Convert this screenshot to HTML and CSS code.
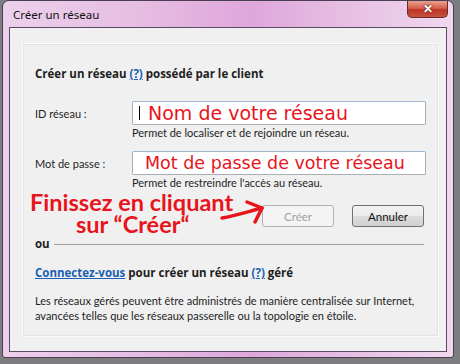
FILE: index.html
```html
<!DOCTYPE html>
<html lang="fr">
<head>
  <meta charset="UTF-8" />
  <title>Créer un réseau</title>
  <link rel="stylesheet" href="styles.css">
</head>
<body>
  <div class="window">
    <div class="titlebar">
      <span class="title">Créer un réseau</span>
      <div class="close">&#x2715;</div>
    </div>
    <div class="client">
      <div class="panel">
        <div class="heading">Créer un réseau <a href="#">(?)</a> possédé par le client</div>

        <div class="field">
          <label>ID réseau :</label>
          <div class="input"><span class="caret"></span><span class="note note-name">Nom de votre réseau</span></div>
        </div>
        <div class="hint">Permet de localiser et de rejoindre un réseau.</div>

        <div class="field field-pass">
          <label>Mot de passe :</label>
          <div class="input"><span class="note note-pass">Mot de passe de votre réseau</span></div>
        </div>
        <div class="hint">Permet de restreindre l'accès au réseau.</div>

        <div class="buttons">
          <button class="btn" disabled>Créer</button>
          <button class="btn">Annuler</button>
        </div>

        <div class="or"><span>ou</span><div class="line"></div></div>

        <div class="connect"><a href="#">Connectez-vous</a> pour créer un réseau <a href="#">(?)</a> géré</div>
        <p class="desc">Les réseaux gérés peuvent être administrés de manière centralisée sur Internet,<br>avancées telles que les réseaux passerelle ou la topologie en étoile.</p>

        <div class="callout">
          <div>Finissez en cliquant</div>
          <div class="callout-2">sur “Créer“</div>
        </div>
        <svg class="arrow" width="60" height="30" viewBox="0 0 60 30">
          <path d="M7 20 C20 18 35 13 47 10" stroke="#e8141c" stroke-width="3.5" fill="none" stroke-linecap="round"/>
          <path d="M32 4 L47 10 L40 24" stroke="#e8141c" stroke-width="3.5" fill="none" stroke-linecap="round" stroke-linejoin="round"/>
        </svg>
      </div>
    </div>
  </div>
</body>
</html>
```

FILE: styles.css
```css
body {
  margin: 0;
  background-color: #7d7d80;
  font-family: "Lato", "Noto Sans", sans-serif;
  font-size: 11px;
  color: #1e1e1e;
  height: 364px;
  overflow: hidden;
}

.window {
  margin-left: 2px;
  width: 452px;
  height: 358px;
  border: 1px solid #4a3e52;
  border-radius: 7px 7px 3px 3px;
  background: linear-gradient(90deg, #ecd0ec 0%, #e6bde3 30%, #dea7db 55%, #e6bde3 75%, #f0d8ef 100%);
  box-sizing: border-box;
  display: flex;
  flex-direction: column;
  padding: 0 6px 5px 6px;
}

.titlebar {
  height: 26px;
  display: flex;
  justify-content: space-between;
  align-items: flex-start;
}

.title {
  font-family: "Noto Sans", sans-serif;
  font-size: 11.5px;
  color: #111;
  margin-top: 6px;
  margin-left: 4px;
}

.close {
  width: 41px;
  height: 17px;
  margin-right: -1px;
  border: 1px solid #6b2a2a;
  border-top: none;
  border-radius: 0 0 5px 5px;
  background: linear-gradient(#e8a090 0%, #d8604c 45%, #bc3426 55%, #c8523f 100%);
  color: #fff;
  font-size: 12px;
  font-weight: bold;
  text-align: center;
  line-height: 16px;
  text-shadow: 0 0 2px #5a1a1a, 0 0 1px #5a1a1a;
  box-sizing: border-box;
}

.client {
  flex: 1;
  min-height: 0;
  background-color: #f0f0f0;
  border: 1px solid #5b4a62;
  padding: 15px 9px 14px 12px;
  display: flex;
}

.panel {
  flex: 1;
  position: relative;
  border: 1px solid #fbfbfb;
  box-shadow: inset 0 0 0 1px #e4e4e4;
  padding: 22px 12px 0 12px;
}

a {
  color: #1a5fb4;
}

.heading,
.connect,
.or {
  font-family: "Open Sans", "Noto Sans", sans-serif;
  font-weight: bold;
  font-size: 11.5px;
  line-height: 16px;
}

.field {
  display: flex;
  align-items: center;
  margin-top: 19px;
}

.field-pass {
  margin-top: 11px;
}

label {
  width: 97px;
}

.input {
  width: 294px;
  height: 24px;
  box-sizing: border-box;
  border: 1px solid #abadb3;
  border-top-color: #a0b8cf;
  border-radius: 2px;
  background: #fff;
  position: relative;
  display: flex;
  align-items: center;
  overflow: hidden;
}

.caret {
  position: absolute;
  left: 6px;
  top: 4px;
  width: 1px;
  height: 14px;
  background: #000;
}

.note {
  font-family: "DejaVu Sans", sans-serif;
  color: #e8141c;
  line-height: 20px;
  white-space: nowrap;
}

.note-name {
  font-size: 19px;
  margin-left: 15px;
}

.note-pass {
  font-size: 17.5px;
  margin-left: 12px;
}

.hint {
  margin-left: 97px;
  margin-top: 1px;
  line-height: 14px;
}

.buttons {
  display: flex;
  justify-content: flex-end;
  gap: 18px;
  margin-top: 15px;
  margin-right: 2px;
}

.btn {
  width: 72px;
  height: 22px;
  border: 1px solid #707070;
  border-radius: 3px;
  background: linear-gradient(#f2f2f2 0%, #ebebeb 48%, #dddddd 52%, #cfcfcf 100%);
  font-family: "Lato", "Noto Sans", sans-serif;
  font-size: 11.5px;
  color: #111;
  padding: 0;
}

.btn:disabled {
  border-color: #adb2b5;
  background: #f4f4f4;
  color: #a0a0a0;
}

.or {
  display: flex;
  align-items: center;
  gap: 4px;
  margin-top: 9px;
}

.or .line {
  flex: 1;
  height: 1px;
  background: #a0a0a0;
  margin-right: 2px;
}

.connect {
  margin-top: 13px;
}

.desc {
  margin: 12px 0 0 0;
  line-height: 15px;
  white-space: nowrap;
}

.callout {
  position: absolute;
  left: 7px;
  top: 147px;
  font-family: "Lato", sans-serif;
  font-weight: bold;
  font-size: 23.5px;
  line-height: 22px;
  color: #e8141c;
}

.callout-2 {
  margin-left: 46px;
}

.arrow {
  position: absolute;
  left: 192px;
  top: 154px;
}
```
